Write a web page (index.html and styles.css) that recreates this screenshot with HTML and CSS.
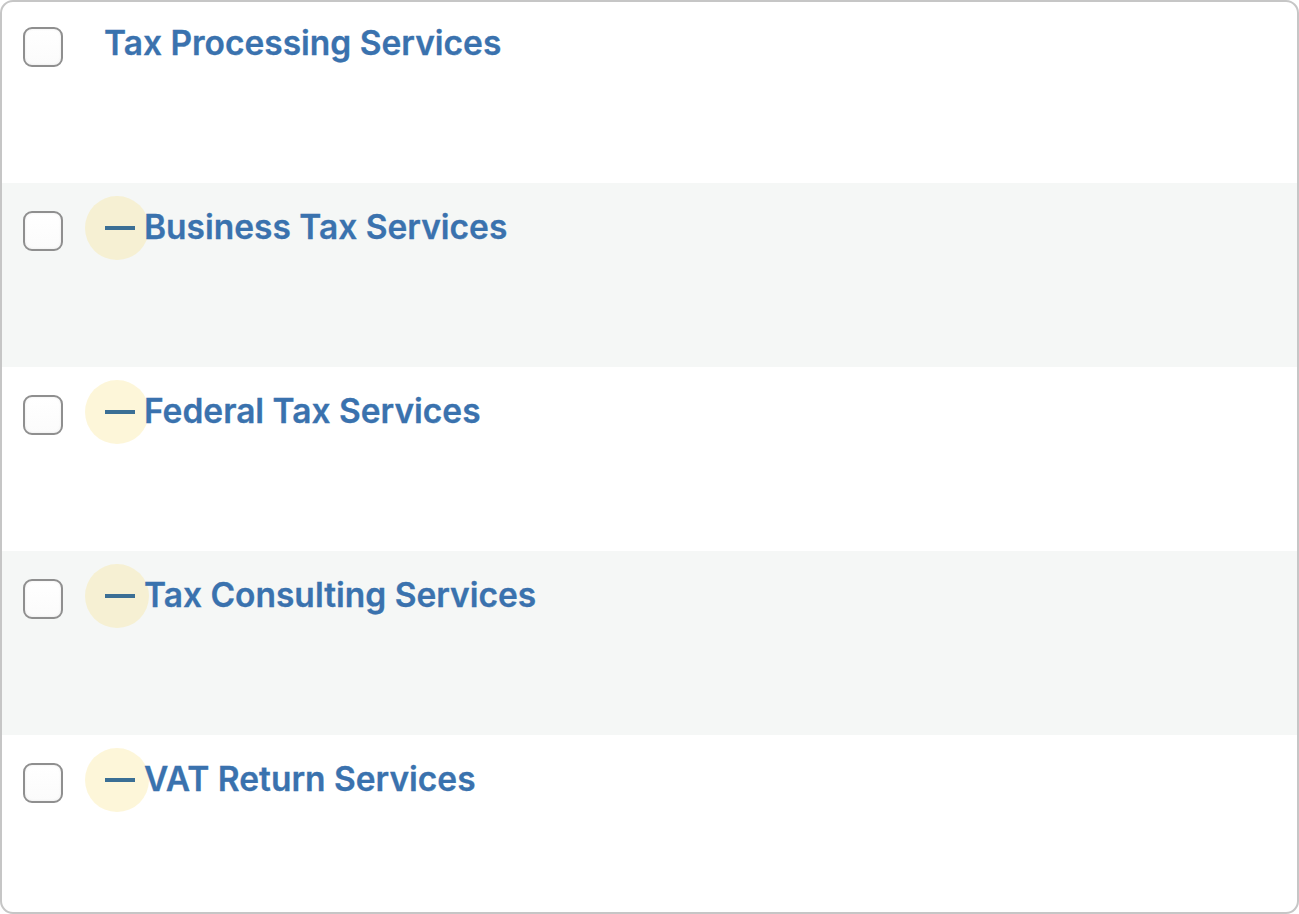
FILE: index.html
```html
<!DOCTYPE html>
<html>
<head>
<meta charset="utf-8">
<link rel="stylesheet" href="styles.css">
</head>
<body>
<div class="list">
  <div class="row row-first">
    <span class="check"></span>
    <span class="label label-root">Tax Processing Services</span>
  </div>
  <div class="row alt">
    <span class="check"></span>
    <span class="toggle"><span class="dash"></span></span>
    <span class="label">Business Tax Services</span>
  </div>
  <div class="row">
    <span class="check"></span>
    <span class="toggle"><span class="dash"></span></span>
    <span class="label">Federal Tax Services</span>
  </div>
  <div class="row alt">
    <span class="check"></span>
    <span class="toggle"><span class="dash"></span></span>
    <span class="label">Tax Consulting Services</span>
  </div>
  <div class="row">
    <span class="check"></span>
    <span class="toggle"><span class="dash"></span></span>
    <span class="label">VAT Return Services</span>
  </div>
</div>
</body>
</html>
```
FILE: styles.css
```css
html, body {
  margin: 0;
  padding: 0;
  background: #ffffff;
}
.list {
  box-sizing: border-box;
  width: 1299px;
  height: 914px;
  border: 2px solid #c6c6c6;
  border-radius: 13px;
  overflow: hidden;
  background: #ffffff;
  font-family: Inter, "Noto Sans", sans-serif;
}
.row {
  display: flex;
  align-items: flex-start;
  height: 184px;
  flex-shrink: 0;
  padding-left: 21px;
  box-sizing: border-box;
}
.row-first {
  margin-top: -3px;
}
.alt {
  background: #f5f7f6;
}
.check {
  box-sizing: border-box;
  width: 40px;
  height: 40px;
  margin-top: 28px;
  border: 2px solid #8f8f8f;
  border-radius: 9px;
  background: linear-gradient(#ffffff, #fbfbfb);
  box-shadow: inset 0 0 3px rgba(0, 0, 0, 0.08);
  flex-shrink: 0;
}
.toggle {
  width: 64px;
  height: 64px;
  margin-top: 13px;
  margin-left: 22px;
  border-radius: 50%;
  background: rgba(250, 225, 130, 0.3);
  display: flex;
  align-items: center;
  justify-content: center;
  flex-shrink: 0;
}
.dash {
  width: 30px;
  height: 4px;
  background: #3b6f95;
  margin-left: 5px;
}
.label {
  font-size: 33.5px;
  font-weight: 600;
  line-height: 40px;
  margin-top: 24px;
  color: #3a72ae;
  white-space: nowrap;
  margin-left: -5px;
  -webkit-text-stroke: 0.3px #3a72ae;
}
.label-root {
  margin-left: 41px;
}
```
